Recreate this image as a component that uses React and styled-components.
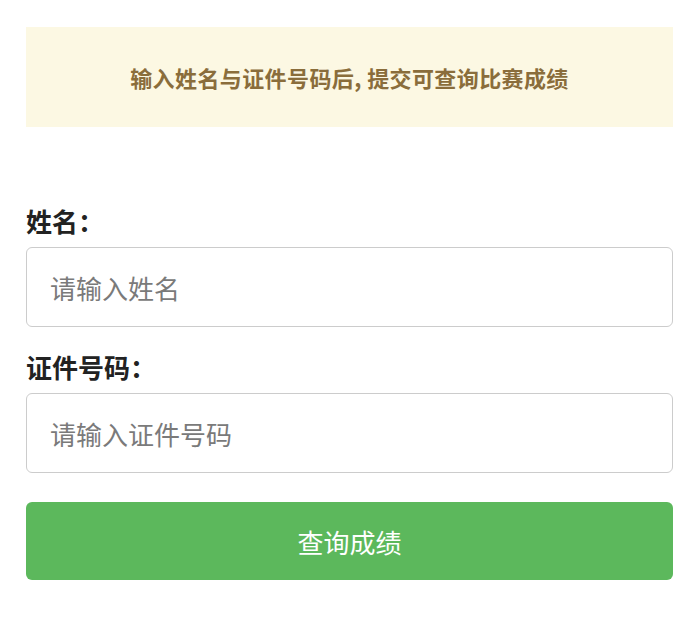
import styled, { createGlobalStyle } from "styled-components"

const GlobalStyle = createGlobalStyle`
    * { box-sizing: border-box; }
    body {
        margin: 0;
        background: #ffffff;
        font-family: "Noto Sans CJK SC", "Noto Sans", sans-serif;
    }
`

export default function App(){
    return(
        <>
            <GlobalStyle />
            <Page>
                <Notice>输入姓名与证件号码后, 提交可查询比赛成绩</Notice>
                <Form onSubmit={e => e.preventDefault()}>
                    <Field>
                        <Label htmlFor="name">姓名：</Label>
                        <Input id="name" placeholder="请输入姓名" />
                    </Field>
                    <Field>
                        <Label htmlFor="idcard">证件号码：</Label>
                        <Input id="idcard" placeholder="请输入证件号码" />
                    </Field>
                    <SubmitButton type="submit">查询成绩</SubmitButton>
                </Form>
            </Page>
        </>
    )
}

const Page = styled.div`
    padding: 27px 26px;
    display: flex;
    flex-direction: column;
`

const Notice = styled.div`
    height: 100px;
    background-color: #fcf8e3;
    color: #8a6d3b;
    font-size: 22px;
    font-weight: 700;
    letter-spacing: 0.4px;
    display: flex;
    align-items: center;
    justify-content: center;
`

const Form = styled.form`
    margin-top: 76px;
    display: flex;
    flex-direction: column;
    gap: 22px;
`

const Field = styled.div`
    display: flex;
    flex-direction: column;
    gap: 8px;
`

const Label = styled.label`
    height: 36px;
    line-height: 36px;
    font-size: 26px;
    font-weight: 700;
    color: #222222;
`

const Input = styled.input`
    height: 80px;
    width: 100%;
    border: 1px solid #cccccc;
    border-radius: 6px;
    padding: 0 23px;
    font-family: inherit;
    font-size: 26px;
    color: #333333;
    outline: none;
    &::placeholder {
        color: #7a7a7a;
    }
`

const SubmitButton = styled.button`
    margin-top: 7px;
    height: 78px;
    width: 100%;
    border: none;
    border-radius: 6px;
    background-color: #5cb85c;
    color: #ffffff;
    font-family: inherit;
    font-size: 26px;
    cursor: pointer;
`
